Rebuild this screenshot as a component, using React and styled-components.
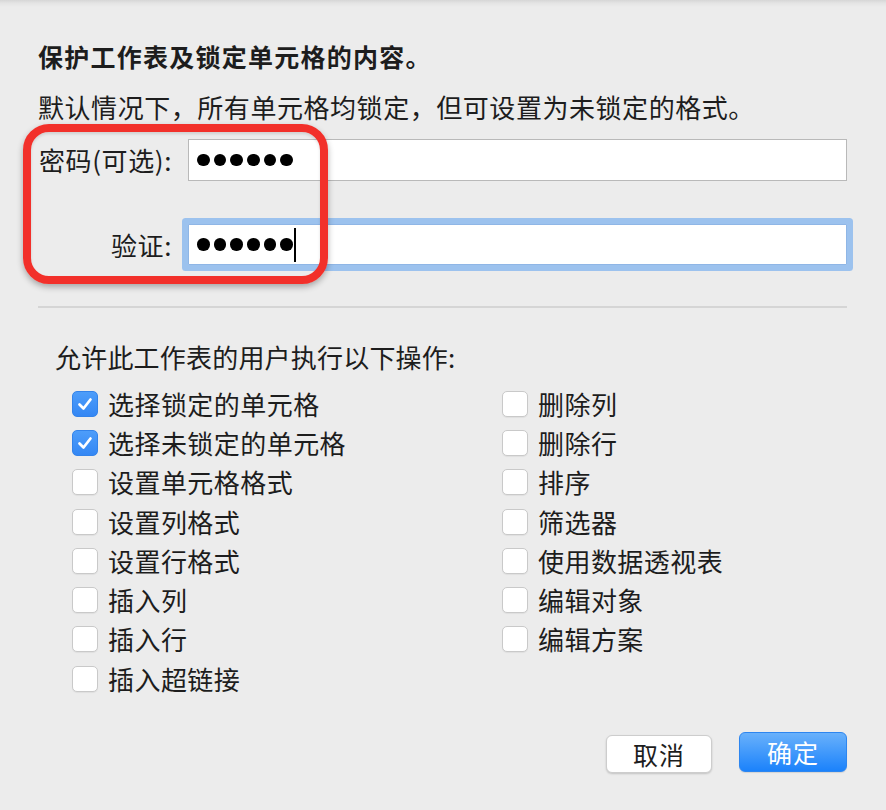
import React from "react";
import styled, { createGlobalStyle } from "styled-components";

const Global = createGlobalStyle`
  html, body { margin: 0; padding: 0; background: #ececec; }
  body { font-family: "Noto Sans CJK SC", "Noto Sans", sans-serif; color: #1d1d1d; }
`;

const Dialog = styled.div`
  position: relative;
  width: 886px;
  height: 810px;
  box-sizing: border-box;
  background: linear-gradient(#d6d6d6 0px, #e4e4e4 3px, #ececec 7px, #ececec 100%);
  padding: 39px 39px 0 38px;
  overflow: hidden;
`;

const Title = styled.div`
  font-size: 25px;
  font-weight: 700;
  line-height: 34px;
  letter-spacing: 1.25px;
`;

const Subtitle = styled.div`
  font-size: 26px;
  line-height: 34px;
  margin-top: 17px;
  letter-spacing: 0.55px;
`;

const FieldRow = styled.div`
  display: flex;
  align-items: center;
  margin-top: ${(p) => p.$mt}px;
`;

const Label = styled.div`
  width: 134px;
  text-align: right;
  font-size: 26px;
  line-height: 34px;
  margin-right: 16px;
  white-space: nowrap;
  letter-spacing: 0.6px;
`;

const Input = styled.div`
  position: relative;
  width: 659px;
  height: ${(p) => (p.$focused ? 41 : 42)}px;
  box-sizing: border-box;
  background: #fff;
  border: 1px solid ${(p) => (p.$focused ? "#8fb6e6" : "#b9b9b9")};
  box-shadow: ${(p) => (p.$focused ? "0 0 0 6px #9cc2ee" : "none")};
  border-radius: ${(p) => (p.$focused ? "1px" : "0")};
  display: flex;
  align-items: center;
  padding-left: 8px;
  gap: 4.2px;
`;

const Dot = styled.span`
  width: 12.5px;
  height: 12.5px;
  border-radius: 50%;
  background: #000;
  flex: none;
`;

const Caret = styled.span`
  width: 2px;
  height: 34px;
  background: #000;
  margin-left: -3px;
`;

const Divider = styled.div`
  height: 2px;
  background: #d5d5d5;
  margin-top: 41px;
`;

const SectionHeader = styled.div`
  font-size: 26px;
  line-height: 34px;
  margin-top: 32px;
  margin-left: 17px;
  letter-spacing: 0.2px;
`;

const Grid = styled.div`
  display: grid;
  grid-template-columns: 430px 1fr;
  grid-auto-flow: column;
  grid-template-rows: repeat(8, 39.3px);
  margin-top: 10px;
  margin-left: 34px;
`;

const Option = styled.div`
  display: flex;
  align-items: center;
  gap: 10px;
  font-size: 26px;
  line-height: 34px;
  letter-spacing: 0.45px;
`;

const Box = styled.span`
  width: 26px;
  height: 26px;
  box-sizing: border-box;
  border-radius: 5px;
  flex: none;
  display: flex;
  align-items: center;
  justify-content: center;
  background: ${(p) => (p.$checked ? "linear-gradient(#4d9dfa, #3487f4)" : "#fff")};
  border: 1px solid ${(p) => (p.$checked ? "#3383ea" : "#c9c9c9")};
  box-shadow: ${(p) => (p.$checked ? "none" : "0 1px 1px rgba(0,0,0,0.06)")};
`;

const Buttons = styled.div`
  display: flex;
  justify-content: flex-end;
  align-items: center;
  gap: 27px;
  margin-top: 35px;
`;

const Button = styled.div`
  width: ${(p) => (p.$primary ? 108 : 106)}px;
  height: ${(p) => (p.$primary ? 40 : 38)}px;
  box-sizing: border-box;
  border-radius: 6px;
  display: flex;
  align-items: center;
  justify-content: center;
  font-size: 25px;
  letter-spacing: 1px;
  margin-top: ${(p) => (p.$primary ? -2 : 2)}px;
  color: ${(p) => (p.$primary ? "#fff" : "#1d1d1d")};
  background: ${(p) => (p.$primary ? "linear-gradient(#69b1fb, #1b82fb)" : "#fff")};
  border: 1px solid ${(p) => (p.$primary ? "#2d86f0" : "#cdcdcd")};
  box-shadow: ${(p) => (p.$primary ? "0 1px 1px rgba(0,0,0,0.1)" : "0 1px 2px rgba(0,0,0,0.18)")};
`;

const Highlight = styled.div`
  position: absolute;
  left: 23px;
  top: 124px;
  width: 305px;
  height: 160px;
  box-sizing: border-box;
  border: 8px solid #f2302a;
  border-radius: 26px;
  box-shadow: 0 3px 6px rgba(0, 0, 0, 0.3), inset 0 2px 3px rgba(0,0,0,0.12);
  pointer-events: none;
`;

const Check = () => (
  <svg width="20" height="20" viewBox="0 0 20 20">
    <path d="M4.5 10.5 L8.5 14.5 L15.5 5.5" fill="none" stroke="#fff" strokeWidth="2.7" strokeLinecap="round" strokeLinejoin="round" />
  </svg>
);

const options = [
  ["选择锁定的单元格", true],
  ["选择未锁定的单元格", true],
  ["设置单元格格式", false],
  ["设置列格式", false],
  ["设置行格式", false],
  ["插入列", false],
  ["插入行", false],
  ["插入超链接", false],
  ["删除列", false],
  ["删除行", false],
  ["排序", false],
  ["筛选器", false],
  ["使用数据透视表", false],
  ["编辑对象", false],
  ["编辑方案", false],
];

const Dots = () => (
  <>
    {Array.from({ length: 6 }).map((_, i) => (
      <Dot key={i} />
    ))}
  </>
);

export default function App() {
  return (
    <>
      <Global />
      <Dialog>
        <Title>保护工作表及锁定单元格的内容。</Title>
        <Subtitle>默认情况下，所有单元格均锁定，但可设置为未锁定的格式。</Subtitle>
        <FieldRow $mt={15}>
          <Label>密码(可选):</Label>
          <Input>
            <Dots />
          </Input>
        </FieldRow>
        <FieldRow $mt={43}>
          <Label>验证:</Label>
          <Input $focused>
            <Dots />
            <Caret />
          </Input>
        </FieldRow>
        <Divider />
        <SectionHeader>允许此工作表的用户执行以下操作:</SectionHeader>
        <Grid>
          {options.map(([label, checked]) => (
            <Option key={label}>
              <Box $checked={checked}>{checked && <Check />}</Box>
              {label}
            </Option>
          ))}
        </Grid>
        <Buttons>
          <Button>取消</Button>
          <Button $primary>确定</Button>
        </Buttons>
        <Highlight />
      </Dialog>
    </>
  );
}
